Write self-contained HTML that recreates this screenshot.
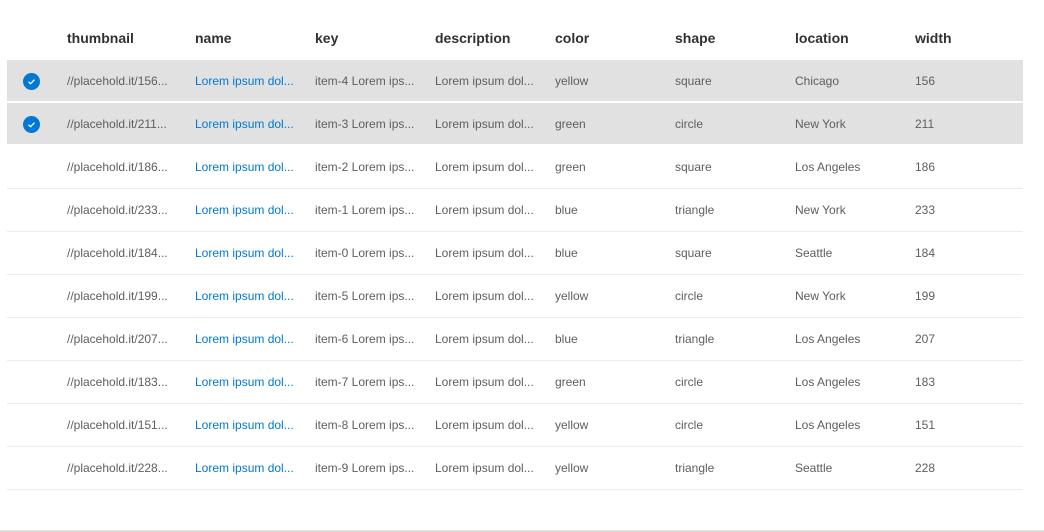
<!DOCTYPE html>
<html><head><meta charset="utf-8"><style>
*{margin:0;padding:0;box-sizing:border-box}
body{width:1044px;height:532px;background:#fff;font-family:"Segoe UI","Liberation Sans",sans-serif;position:relative;overflow:hidden;color:#323130}
.hdr{position:absolute;top:17px;left:7px;width:1016px;height:43px;font-size:14px;font-weight:600;color:#323130}
.row{position:absolute;left:7px;width:1016px;height:43px;border-bottom:1px solid #edebe9;font-size:12px;color:#605e5c}
.sel{background:#e1e1e1;border-bottom:2px solid #fff;color:#605e5c}
.c{position:absolute;top:0;line-height:42px;white-space:nowrap}
.hdr .c{line-height:43px}
.lnk{color:#0078d4}
.chk{position:absolute;left:16px;top:13px;width:17px;height:17px;border-radius:50%;background:#0078d4}
.foot{position:absolute;left:0;top:530px;width:1044px;height:2px;background:#e1dfdd}
</style></head><body>
<div class="hdr">
<span class="c" style="left:60px">thumbnail</span><span class="c" style="left:188px">name</span><span class="c" style="left:308px">key</span><span class="c" style="left:428px">description</span><span class="c" style="left:548px">color</span><span class="c" style="left:668px">shape</span><span class="c" style="left:788px">location</span><span class="c" style="left:908px">width</span>
</div>
<div class="row sel" style="top:60px"><div class="chk"><svg width="17" height="17" viewBox="0 0 17 17"><path d="M5.5 8.7l2 2 4-4" stroke="#fff" stroke-width="1.3" fill="none"/></svg></div><span class="c" style="left:60px">//placehold.it/156...</span><span class="c lnk" style="left:188px">Lorem ipsum dol...</span><span class="c" style="left:308px">item-4 Lorem ips...</span><span class="c" style="left:428px">Lorem ipsum dol...</span><span class="c" style="left:548px">yellow</span><span class="c" style="left:668px">square</span><span class="c" style="left:788px">Chicago</span><span class="c" style="left:908px">156</span></div>
<div class="row sel" style="top:103px"><div class="chk"><svg width="17" height="17" viewBox="0 0 17 17"><path d="M5.5 8.7l2 2 4-4" stroke="#fff" stroke-width="1.3" fill="none"/></svg></div><span class="c" style="left:60px">//placehold.it/211...</span><span class="c lnk" style="left:188px">Lorem ipsum dol...</span><span class="c" style="left:308px">item-3 Lorem ips...</span><span class="c" style="left:428px">Lorem ipsum dol...</span><span class="c" style="left:548px">green</span><span class="c" style="left:668px">circle</span><span class="c" style="left:788px">New York</span><span class="c" style="left:908px">211</span></div>
<div class="row" style="top:146px"><span class="c" style="left:60px">//placehold.it/186...</span><span class="c lnk" style="left:188px">Lorem ipsum dol...</span><span class="c" style="left:308px">item-2 Lorem ips...</span><span class="c" style="left:428px">Lorem ipsum dol...</span><span class="c" style="left:548px">green</span><span class="c" style="left:668px">square</span><span class="c" style="left:788px">Los Angeles</span><span class="c" style="left:908px">186</span></div>
<div class="row" style="top:189px"><span class="c" style="left:60px">//placehold.it/233...</span><span class="c lnk" style="left:188px">Lorem ipsum dol...</span><span class="c" style="left:308px">item-1 Lorem ips...</span><span class="c" style="left:428px">Lorem ipsum dol...</span><span class="c" style="left:548px">blue</span><span class="c" style="left:668px">triangle</span><span class="c" style="left:788px">New York</span><span class="c" style="left:908px">233</span></div>
<div class="row" style="top:232px"><span class="c" style="left:60px">//placehold.it/184...</span><span class="c lnk" style="left:188px">Lorem ipsum dol...</span><span class="c" style="left:308px">item-0 Lorem ips...</span><span class="c" style="left:428px">Lorem ipsum dol...</span><span class="c" style="left:548px">blue</span><span class="c" style="left:668px">square</span><span class="c" style="left:788px">Seattle</span><span class="c" style="left:908px">184</span></div>
<div class="row" style="top:275px"><span class="c" style="left:60px">//placehold.it/199...</span><span class="c lnk" style="left:188px">Lorem ipsum dol...</span><span class="c" style="left:308px">item-5 Lorem ips...</span><span class="c" style="left:428px">Lorem ipsum dol...</span><span class="c" style="left:548px">yellow</span><span class="c" style="left:668px">circle</span><span class="c" style="left:788px">New York</span><span class="c" style="left:908px">199</span></div>
<div class="row" style="top:318px"><span class="c" style="left:60px">//placehold.it/207...</span><span class="c lnk" style="left:188px">Lorem ipsum dol...</span><span class="c" style="left:308px">item-6 Lorem ips...</span><span class="c" style="left:428px">Lorem ipsum dol...</span><span class="c" style="left:548px">blue</span><span class="c" style="left:668px">triangle</span><span class="c" style="left:788px">Los Angeles</span><span class="c" style="left:908px">207</span></div>
<div class="row" style="top:361px"><span class="c" style="left:60px">//placehold.it/183...</span><span class="c lnk" style="left:188px">Lorem ipsum dol...</span><span class="c" style="left:308px">item-7 Lorem ips...</span><span class="c" style="left:428px">Lorem ipsum dol...</span><span class="c" style="left:548px">green</span><span class="c" style="left:668px">circle</span><span class="c" style="left:788px">Los Angeles</span><span class="c" style="left:908px">183</span></div>
<div class="row" style="top:404px"><span class="c" style="left:60px">//placehold.it/151...</span><span class="c lnk" style="left:188px">Lorem ipsum dol...</span><span class="c" style="left:308px">item-8 Lorem ips...</span><span class="c" style="left:428px">Lorem ipsum dol...</span><span class="c" style="left:548px">yellow</span><span class="c" style="left:668px">circle</span><span class="c" style="left:788px">Los Angeles</span><span class="c" style="left:908px">151</span></div>
<div class="row" style="top:447px"><span class="c" style="left:60px">//placehold.it/228...</span><span class="c lnk" style="left:188px">Lorem ipsum dol...</span><span class="c" style="left:308px">item-9 Lorem ips...</span><span class="c" style="left:428px">Lorem ipsum dol...</span><span class="c" style="left:548px">yellow</span><span class="c" style="left:668px">triangle</span><span class="c" style="left:788px">Seattle</span><span class="c" style="left:908px">228</span></div>
<div class="foot"></div>
</body></html>
